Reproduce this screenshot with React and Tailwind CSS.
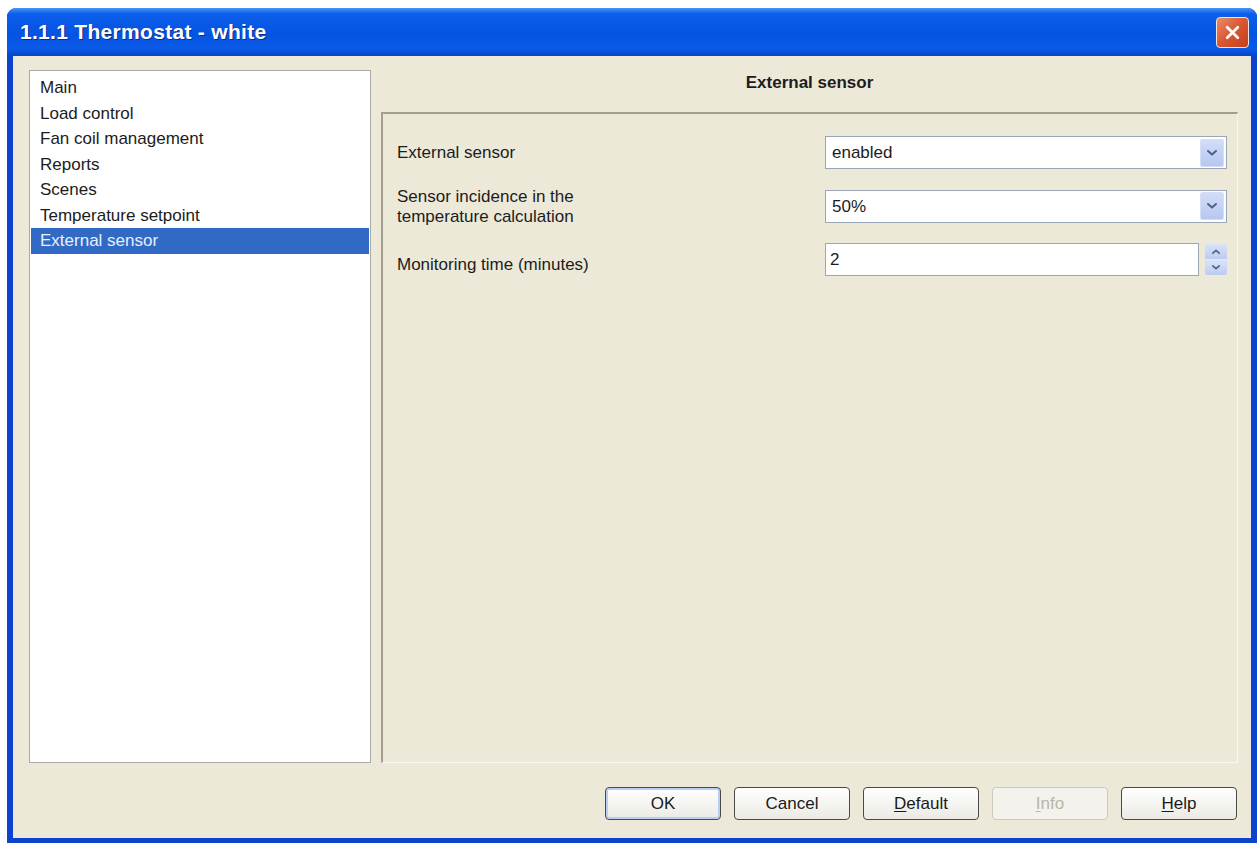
import React from "react";

const items = [
  "Main",
  "Load control",
  "Fan coil management",
  "Reports",
  "Scenes",
  "Temperature setpoint",
  "External sensor",
];

function Chevron({ up = false, className = "" }) {
  return (
    <svg viewBox="0 0 10 6" className={className}>
      <path
        d={up ? "M1 5 L5 1.5 L9 5" : "M1 1 L5 4.5 L9 1"}
        fill="none"
        stroke="#4d6185"
        strokeWidth="2"
        strokeLinecap="round"
        strokeLinejoin="round"
      />
    </svg>
  );
}

function Dropdown({ value }) {
  return (
    <div className="flex h-[33px] w-full items-center border border-[#9aa6b6] bg-white pl-[6px] pr-[2px]">
      <span className="flex-1 leading-none">{value}</span>
      <div className="flex h-[28px] w-[24px] items-center justify-center rounded-[2px] border border-[#d5def5] bg-gradient-to-b from-[#d3ddf8] to-[#b6c7f1]">
        <Chevron className="h-[6px] w-[10px]" />
      </div>
    </div>
  );
}

function Spin({ value }) {
  return (
    <div className="flex h-[33px] w-full items-center gap-[6px]">
      <div className="flex h-full flex-1 items-center border border-[#9aa6b6] bg-white pl-[4px]">
        <span className="leading-none">{value}</span>
      </div>
      <div className="flex h-[31px] w-[22px] flex-col gap-[1px]">
        <div className="flex flex-1 items-center justify-center rounded-t-[2px] bg-gradient-to-b from-[#dbe3f8] to-[#bccbf2]">
          <Chevron up className="h-[5px] w-[8px]" />
        </div>
        <div className="flex flex-1 items-center justify-center rounded-b-[2px] bg-gradient-to-b from-[#dbe3f8] to-[#bccbf2]">
          <Chevron className="h-[5px] w-[8px]" />
        </div>
      </div>
    </div>
  );
}

function DialogButton({ children, primary = false, disabled = false }) {
  const base =
    "flex h-[33px] w-[116px] items-center justify-center rounded-[4px] border text-[17px] leading-none";
  if (disabled) {
    return (
      <div className={`${base} border-[#cdcabd] bg-[#f3f2ec] text-[#b9b6a8]`}>
        {children}
      </div>
    );
  }
  return (
    <div
      className={`${base} border-[#4a4a48] bg-gradient-to-b from-white to-[#ebeae4] text-[#1a1a1a] ${
        primary ? "shadow-[inset_0_0_0_2px_#bccdf3]" : ""
      }`}
    >
      {children}
    </div>
  );
}

export default function App() {
  return (
    <div className="h-[845px] w-[1259px] bg-white pb-[2px] pl-[7px] pr-[2px] pt-[8px] font-['Liberation_Sans',Arial,sans-serif] text-[17px] text-[#1c1c1c]">
      <div className="flex h-full flex-col overflow-hidden rounded-t-[9px] bg-[#0b43cf]">
        {/* title bar */}
        <div className="flex h-[48px] items-center justify-between bg-[linear-gradient(to_bottom,#4a95f7_0%,#0c5fea_12%,#0553e2_55%,#0b5ae8_85%,#0446cc_100%)] pl-[13px] pr-[8px]">
          <span className="text-[21px] font-bold tracking-[0.3px] text-white [text-shadow:1px_1px_0_#0a2a8c]">
            1.1.1 Thermostat - white
          </span>
          <div className="flex h-[31px] w-[33px] items-center justify-center rounded-[4px] border border-[#f2e6e0] bg-gradient-to-br from-[#ea8a6a] via-[#d9562f] to-[#c43e1c]">
            <svg viewBox="0 0 16 16" className="h-[17px] w-[17px]">
              <path
                d="M3 3 L13 13 M13 3 L3 13"
                stroke="white"
                strokeWidth="2.6"
                strokeLinecap="round"
              />
            </svg>
          </div>
        </div>

        {/* client area */}
        <div className="mx-[6px] mb-[5px] flex flex-1 flex-col bg-[#ece9d8]">
          <div className="flex flex-1 gap-[10px] pl-[16px] pr-[13px] pt-[14px]">
            {/* page list */}
            <div className="flex w-[342px] flex-col border border-[#a9a9a6] bg-white px-[1px] pt-[4px]">
              {items.map((item) => {
                const selected = item === "External sensor";
                return (
                  <div
                    key={item}
                    className={`h-[25.5px] pl-[9px] leading-[25.5px] ${
                      selected ? "bg-[#316ac5] text-[#e6efff]" : ""
                    }`}
                  >
                    {item}
                  </div>
                );
              })}
            </div>

            {/* parameter page */}
            <div className="flex flex-1 flex-col">
              <div className="h-[42px] pt-[3px] text-center font-bold leading-[20px]">
                External sensor
              </div>
              <div className="flex flex-1 flex-col gap-[20px] border-b border-l-2 border-r border-t-2 border-b-[#f8f7f1] border-l-[#a39f8e] border-r-[#f8f7f1] border-t-[#a39f8e] pl-[14px] pr-[10px] pt-[22px]">
                <div className="flex h-[33px] items-center justify-between">
                  <span>External sensor</span>
                  <div className="w-[402px]">
                    <Dropdown value="enabled" />
                  </div>
                </div>
                <div className="flex h-[34px] items-center justify-between">
                  <span className="pt-[2px] leading-[20px]">
                    Sensor incidence in the
                    <br />
                    temperature calculation
                  </span>
                  <div className="w-[402px]">
                    <Dropdown value="50%" />
                  </div>
                </div>
                <div className="flex h-[33px] items-center justify-between">
                  <span className="pt-[10px]">Monitoring time (minutes)</span>
                  <div className="w-[402px]">
                    <Spin value="2" />
                  </div>
                </div>
              </div>
            </div>
          </div>

          {/* dialog buttons */}
          <div className="flex h-[75px] items-start justify-end gap-[13px] pr-[14px] pt-[24px]">
            <DialogButton primary>OK</DialogButton>
            <DialogButton>Cancel</DialogButton>
            <DialogButton>
              <span>
                <span className="underline underline-offset-2">D</span>efault
              </span>
            </DialogButton>
            <DialogButton disabled>
              <span>
                <span className="underline underline-offset-2">I</span>nfo
              </span>
            </DialogButton>
            <DialogButton>
              <span>
                <span className="underline underline-offset-2">H</span>elp
              </span>
            </DialogButton>
          </div>
        </div>
      </div>
    </div>
  );
}
